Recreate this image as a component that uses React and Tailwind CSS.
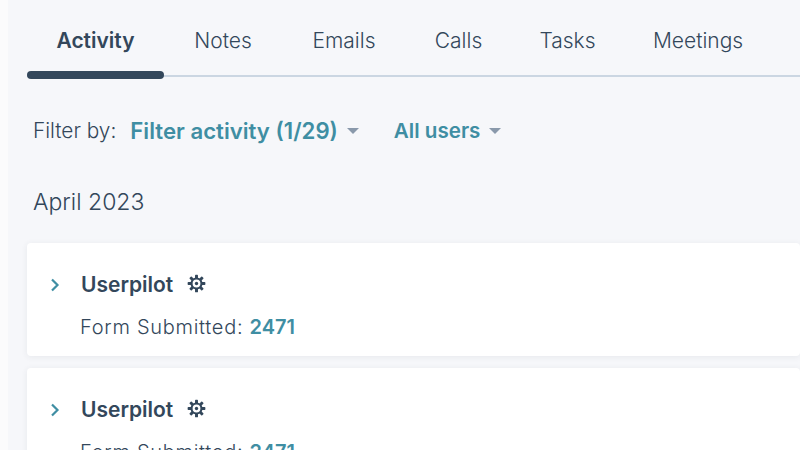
function Gear() {
  return (
    <svg viewBox="0 0 18 18" className="w-[19px] h-[19px] ml-[14px] mt-[-3px] text-[#33475b]">
      <g fill="currentColor">
        {[0, 45, 90, 135, 180, 225, 270, 315].map((a) => (
          <rect key={a} x="7.6" y="0.6" width="2.8" height="4" rx="0.7" transform={`rotate(${a} 9 9)`} />
        ))}
      </g>
      <circle cx="9" cy="9" r="4.7" fill="none" stroke="currentColor" strokeWidth="2" />
      <circle cx="9" cy="9" r="1.6" fill="currentColor" />
    </svg>
  );
}

function Chevron() {
  return (
    <svg viewBox="0 0 10 14" className="w-[10px] h-[14px] text-[#3f8ea3]">
      <path d="M2 1.5l5.5 5.5-5.5 5.5" fill="none" stroke="currentColor" strokeWidth="2.2" />
    </svg>
  );
}

function Caret() {
  return <span className="block w-0 h-0 border-x-[6px] border-x-transparent border-t-[6px] border-t-[#8a99ab]" />;
}

function Card({ last }) {
  return (
    <div className={`bg-white rounded-[4px] shadow-[0_1px_6px_rgba(45,62,80,0.08)] pl-[23px] pt-[28px] ${last ? "h-[100px]" : "h-[113px] mb-[12px]"}`}>
      <div className="flex items-center h-[28px]">
        <Chevron />
        <span className="ml-[21px] text-[21px] font-semibold text-[#33475b]">Userpilot</span>
        <Gear />
      </div>
      <div className="ml-[30px] mt-[14px] text-[20px] leading-[28px] font-light tracking-[0.72px] text-[#33475b]">
        Form Submitted: <span className="font-semibold tracking-normal text-[#3f8ea3]">2471</span>
      </div>
    </div>
  );
}

export default function App() {
  const tabs = [
    ["Notes", "w-[58px]"],
    ["Emails", "w-[64px]"],
    ["Calls", "w-[45px]"],
    ["Tasks", "w-[53px]"],
    ["Meetings", "w-[88px]"],
  ];
  return (
    <div className="w-[800px] h-[450px] overflow-hidden bg-[#fbfbfc] pl-[8px] font-['Inter',sans-serif]">
      <div className="h-full bg-[#f6f7fa] pl-[19px]">
        {/* tabs */}
        <div className="flex h-[77px] border-b-[2px] border-[#cbd6e2] relative">
          <div className="w-[137px] pt-[26px] text-center text-[21px] leading-[30px] font-semibold text-[#33475b]">Activity</div>
          <div className="absolute left-0 top-[71px] w-[137px] h-[8px] rounded-full bg-[#33475b]" />
          <div className="flex gap-[60px] pl-[30px] pt-[26px] text-[21px] leading-[30px] font-light text-[#33475b]">
            {tabs.map(([t, w]) => <span key={t} className={`${w} flex justify-center whitespace-nowrap`}>{t}</span>)}
          </div>
        </div>

        {/* filters */}
        <div className="flex items-center mt-[39px] h-[30px] pl-[6px]">
          <span className="text-[20.8px] font-light text-[#33475b]">Filter by:</span>
          <span className="ml-[14px] text-[22.2px] font-semibold text-[#3f8ea3]">Filter activity (1/29)</span>
          <span className="ml-[9px]"><Caret /></span>
          <span className="ml-[35px] text-[20.6px] font-semibold text-[#3f8ea3]">All users</span>
          <span className="ml-[9px]"><Caret /></span>
        </div>

        <div className="mt-[36px] pl-[6px] text-[23px] leading-[40px] font-light text-[#33475b]">April 2023</div>

        <div className="mt-[21px]">
          <Card />
          <Card last />
        </div>
      </div>
    </div>
  );
}
